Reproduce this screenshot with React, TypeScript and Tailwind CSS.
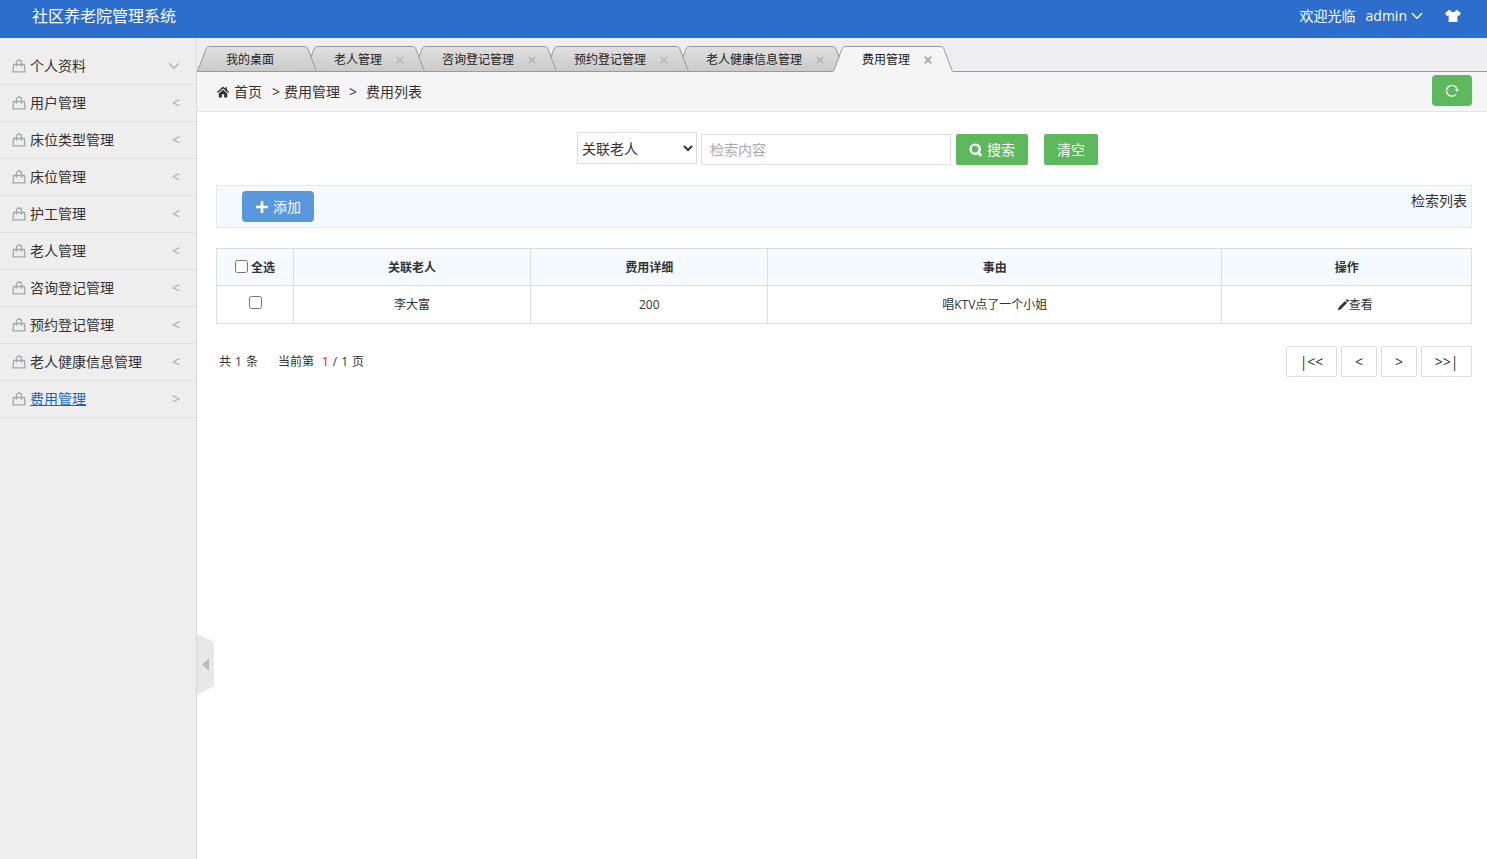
import clsx from 'clsx';

type MenuItem = {
	label: string;
	mark: 'down' | '<' | '>';
	active?: boolean;
};

type Tab = {
	label: string;
	closable?: boolean;
	active?: boolean;
	layer: string;
};

const menu: MenuItem[] = [
	{ label: '个人资料', mark: 'down' },
	{ label: '用户管理', mark: '<' },
	{ label: '床位类型管理', mark: '<' },
	{ label: '床位管理', mark: '<' },
	{ label: '护工管理', mark: '<' },
	{ label: '老人管理', mark: '<' },
	{ label: '咨询登记管理', mark: '<' },
	{ label: '预约登记管理', mark: '<' },
	{ label: '老人健康信息管理', mark: '<' },
	{ label: '费用管理', mark: '>', active: true },
];

// earlier tabs overlap the following ones, the active tab is above all
const tabs: Tab[] = [
	{ label: '我的桌面', layer: 'z-5' },
	{ label: '老人管理', closable: true, layer: 'z-4' },
	{ label: '咨询登记管理', closable: true, layer: 'z-3' },
	{ label: '预约登记管理', closable: true, layer: 'z-2' },
	{ label: '老人健康信息管理', closable: true, layer: 'z-1' },
	{ label: '费用管理', closable: true, active: true, layer: 'z-6' },
];

const rows = [{ id: 1, name: '李大富', detail: '200', reason: '唱KTV点了一个小姐' }];

const pages = [
	{ text: '|<<', label: '首页', size: 'w-[51px]' },
	{ text: '<', label: '上一页', size: 'w-9' },
	{ text: '>', label: '下一页', size: 'w-9' },
	{ text: '>>|', label: '末页', size: 'w-[51px]' },
];

function BagIcon() {
	return (
		<svg className="mr-1 h-[14px] w-[14px] shrink-0" viewBox="0 0 14 14" fill="none" stroke="#a3a8ab" strokeWidth="1.3">
			<path d="M1.6 5.5h10.8l.6 7.4H1z" />
			<path d="M4.5 7.8V3.4C4.5 1.9 5.6 1 7 1s2.5.9 2.5 2.4v4.4" />
		</svg>
	);
}

function Chevron({ className }: { className: string }) {
	return (
		<svg className={className} viewBox="0 0 12 8" fill="none" stroke="currentColor" strokeWidth="1.5">
			<path d="M1 1.2l5 5 5-5" />
		</svg>
	);
}

function TabEdge({ id, active, right }: { id: string; active?: boolean; right?: boolean }) {
	return (
		<svg className="h-[26px] w-[18px] shrink-0" viewBox="0 0 18 26">
			<defs>
				<linearGradient id={id} x1="0" y1="0" x2="0" y2="1">
					<stop offset="0" stopColor={active ? '#f5f5f5' : '#e0e0e0'} />
					<stop offset="1" stopColor={active ? '#f5f5f5' : '#cacaca'} />
				</linearGradient>
			</defs>
			<g transform={right ? 'translate(18 0) scale(-1 1)' : undefined}>
				<path d="M18 .5h-5c-2.3 0-3.3.8-4.1 2.8L1.5 23c-.5 1.400-.8 2-1.500 2.500V26h18z" fill={`url(#${id})`} />
				<path d="M18 .5h-5c-2.3 0-3.3.8-4.1 2.8L1.5 23c-.5 1.400-.8 2-1.500 2.500" fill="none" stroke="#999" />
				{!active && <path d="M0 25.5h18" stroke="#999" />}
			</g>
		</svg>
	);
}

function TabButton({ tab, index }: { tab: Tab; index: number }) {
	return (
		<li className={clsx('relative flex h-[26px]', tab.layer, index > 0 && '-ml-3')}>
			<TabEdge id={`edge-l${index}`} active={tab.active} />
			<div
				className={clsx(
					'flex items-center border-t border-[#999] pr-[7px] pl-[11px]',
					tab.active ? 'bg-[#f5f5f5]' : 'border-b bg-linear-to-b from-[#e0e0e0] to-[#cacaca] pt-px'
				)}
			>
				<button type="button" className="text-xs whitespace-nowrap text-[#222]">
					{tab.label}
				</button>
				<span className="flex w-[18px] justify-end">
					{tab.closable && (
						<button type="button" aria-label={`关闭${tab.label}`} className="-mr-1">
							<svg
								className="h-2 w-2"
								viewBox="0 0 8 8"
								stroke={tab.active ? '#a5a5a5' : '#b2b2b2'}
								strokeWidth={tab.active ? '1.7' : '1.4'}
							>
								<path d="M.7.7l6.6 6.6M7.3.7L.7 7.3" />
							</svg>
						</button>
					)}
				</span>
			</div>
			<TabEdge id={`edge-r${index}`} active={tab.active} right />
		</li>
	);
}

function Header() {
	return (
		<header className="flex h-[38px] items-center justify-between bg-[#2d6dcc] pr-[26px] pb-[6px] pl-8 text-white">
			<a href="#" className="text-base">
				社区养老院管理系统
			</a>
			<div className="flex items-center text-sm">
				<span>欢迎光临</span>
				<button type="button" className="ml-[10px] flex items-center gap-1">
					admin
					<Chevron className="h-2 w-3" />
				</button>
				<button type="button" aria-label="换肤" className="ml-[22px]">
					<svg className="h-3 w-4" viewBox="0 0 16 12" fill="currentColor">
						<path d="M5 0c.6 1.500 1.500 2.100 3 2.100S10.400 1.500 11 0h1.200L16 3.200l-2 2.900-1.600-.9V12H3.600V5.200L2 6.100 0 3.200 3.800 0z" />
					</svg>
				</button>
			</div>
		</header>
	);
}

function Sidebar() {
	return (
		<aside className="w-[197px] shrink-0 border-r border-[#d8d8d8] bg-[#eee] pt-[10px]">
			<ul>
				{menu.map((item) => (
					<li key={item.label} className="border-b border-[#e2e2e2]">
						<a href="#" className="flex h-9 items-center pr-4 pl-3 text-sm text-[#333]">
							<BagIcon />
							<span className={clsx('grow', item.active && 'text-[#1565c8] underline')}>{item.label}</span>
							{item.mark === 'down' ? (
								<Chevron className="h-2 w-3 text-[#b3b3b3]" />
							) : (
								<span className="text-sm text-[#aaa]">{item.mark}</span>
							)}
						</a>
					</li>
				))}
			</ul>
		</aside>
	);
}

function Breadcrumb() {
	return (
		<nav className="flex h-10 items-center border-b border-[#e5e5e5] bg-[#f5f5f5] pr-[15px] pl-5 text-sm text-[#333]">
			<svg className="mr-[5px] h-3 w-3" viewBox="0 0 12 12" fill="#333">
				<path d="M6 .5L0 6l.9 1L6 2.500 11.100 7l.9-1-2-1.900V1.300H8.500v1.400z" />
				<path d="M6 3.700L1.800 7.400V11.500h3.100V8.300h2.200v3.200h3.100V7.400z" />
			</svg>
			<a href="#">首页</a>
			<span className="mr-1 ml-[10px]">&gt;</span>
			<a href="#">费用管理</a>
			<span className="mx-[9px]">&gt;</span>
			<span>费用列表</span>
			<button
				type="button"
				aria-label="刷新"
				className="mb-[3px] ml-auto flex h-[31px] w-10 items-center justify-center rounded bg-[#5eb95e] text-white"
			>
				<svg className="h-[14px] w-[14px]" viewBox="0 0 14 14" fill="none" stroke="currentColor" strokeWidth="1.3">
					<path d="M11 11.300A5.400 5.400 0 1 1 12.200 6.800" />
					<path d="M9.800 6.300h4.200l-2 2.800z" fill="currentColor" stroke="none" />
				</svg>
			</button>
		</nav>
	);
}

function SearchForm() {
	return (
		<form className="flex items-end justify-center pr-[13px]" onSubmit={(e) => e.preventDefault()}>
			<select aria-label="检索字段" className="mb-px h-8 w-[120px] border border-[#ddd] bg-white text-sm text-[#333]">
				<option>关联老人</option>
				<option>费用详细</option>
				<option>事由</option>
			</select>
			<input
				type="text"
				aria-label="检索内容"
				placeholder="检索内容"
				className="ml-1 h-[31px] w-[250px] border border-[#ddd] px-2 text-sm placeholder:text-[#aaa]"
			/>
			<button
				type="submit"
				className="ml-[5px] flex h-[31px] w-[72px] items-center justify-center gap-1 rounded-xs bg-[#5eb95e] text-sm text-white"
			>
				<svg className="h-[14px] w-[14px]" viewBox="0 0 14 14" fill="none" stroke="currentColor" strokeWidth="2.4">
					<circle cx="6.2" cy="6.2" r="4.6" />
					<path d="M9 9.500l3.200 3.200" strokeWidth="2.8" />
				</svg>
				搜索
			</button>
			<button type="reset" className="ml-4 h-[31px] w-[54px] rounded-xs bg-[#5eb95e] text-sm text-white">
				清空
			</button>
		</form>
	);
}

function DataTable() {
	return (
		<table className="mt-5 w-full table-fixed border-collapse text-center text-xs text-[#333]">
			<colgroup>
				<col className="w-[77px]" />
				<col className="w-[18.9%]" />
				<col className="w-[18.9%]" />
				<col />
				<col className="w-[19.9%]" />
			</colgroup>
			<thead>
				<tr className="h-[37px] bg-[#f5fafe] *:border *:border-[#ddd] *:pt-px *:font-bold">
					<th>
						<label className="flex items-center justify-center gap-[3px]">
							<input type="checkbox" className="mb-[2px] h-[13px] w-[13px]" />
							全选
						</label>
					</th>
					<th>关联老人</th>
					<th>费用详细</th>
					<th>事由</th>
					<th>操作</th>
				</tr>
			</thead>
			<tbody>
				{rows.map((row) => (
					<tr key={row.id} className="h-[38px] *:border *:border-[#ddd]">
						<td>
							<input type="checkbox" aria-label={`选择${row.name}`} className="mx-auto mb-1 block h-[13px] w-[13px]" />
						</td>
						<td>{row.name}</td>
						<td>{row.detail}</td>
						<td>{row.reason}</td>
						<td>
							<a href="#" className="flex items-center justify-center pl-4">
								<svg className="h-3 w-3" viewBox="0 0 12 12" fill="#333">
									<path d="M8.700 1.300l2 2 .8-.8c.4-.4.4-.8 0-1.200l-.8-.8c-.4-.4-.8-.4-1.200 0zM8 2L1.800 8.200.8 11.200l3-1L10 4z" />
								</svg>
								查看
							</a>
						</td>
					</tr>
				))}
			</tbody>
		</table>
	);
}

function Pagination() {
	return (
		<div className="mt-[22px] flex items-center justify-between text-xs text-[#333]">
			<p className="flex gap-1 pl-[3px]">
				<span>共</span>
				<span>1</span>
				<span>条</span>
				<span className="ml-4">当前第</span>
				<span className="ml-1 text-[#f00]">1</span>
				<span>/</span>
				<span>1</span>
				<span>页</span>
			</p>
			<div className="flex gap-1">
				{pages.map((page) => (
					<button
						key={page.text}
						type="button"
						aria-label={page.label}
						className={clsx('h-[31px] rounded-xs border border-[#ddd] bg-white text-sm', page.size)}
					>
						{page.text}
					</button>
				))}
			</div>
		</div>
	);
}

export default function App() {
	return (
		<div className="flex min-h-screen flex-col bg-white font-['Open_Sans','Noto_Sans_CJK_SC',sans-serif]">
			<Header />
			<div className="flex grow">
				<Sidebar />
				<main className="relative min-w-0 grow">
					<div className="border-b border-[#999] bg-[#eeeef0] pt-2">
						<ul className="-mb-px flex">
							{tabs.map((tab, index) => (
								<TabButton key={tab.label} tab={tab} index={index} />
							))}
						</ul>
					</div>
					<Breadcrumb />
					<div className="pt-5 pr-[15px] pl-[19px]">
						<SearchForm />
						<div className="mt-5 flex h-[43px] items-start justify-between border border-[#e5eaee] bg-[#f5fafe] pt-[5px] pr-1 pl-[25px] text-sm text-[#333]">
							<button
								type="button"
								className="flex h-[31px] w-[72px] items-center justify-center gap-1 rounded bg-[#5a98de] text-white"
							>
								<svg className="h-[14px] w-[14px]" viewBox="0 0 14 14" stroke="currentColor" strokeWidth="2.6">
									<path d="M7 1v12M1 7h12" />
								</svg>
								添加
							</button>
							<span>检索列表</span>
						</div>
						<DataTable />
						<Pagination />
					</div>
					{/* handle that folds the sidebar, floats over the content */}
					<button type="button" aria-label="收起菜单" className="absolute bottom-[164px] left-0">
						<svg className="h-[61px] w-[17px]" viewBox="0 0 17 61">
							<path d="M0 0l17 8v44L0 61z" fill="#e8e8e8" />
							<path d="M12 24v13l-7-6.500z" fill="#bdbdbd" />
						</svg>
					</button>
				</main>
			</div>
		</div>
	);
}
